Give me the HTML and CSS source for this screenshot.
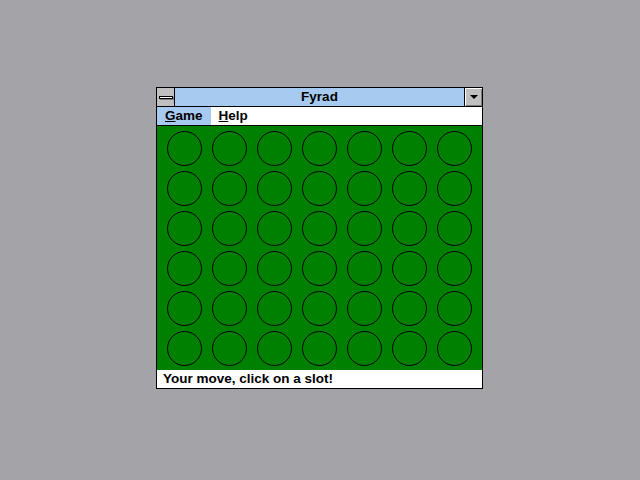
FILE: index.html
```html
<!DOCTYPE html>
<html lang="en">
<head>
    <meta charset="UTF-8">
    <title>Fyrad</title>
    <link rel="stylesheet" href="styles.css">
</head>
<body>
    <div class="window">
        <div class="titlebar">
            <div class="sysmenu"><span class="sysbar"></span></div>
            <div class="title">Fyrad</div>
            <div class="minbtn"><span class="arrow"></span></div>
        </div>
        <div class="menubar">
            <span class="menuitem active"><u>G</u>ame</span>
            <span class="menuitem"><u>H</u>elp</span>
        </div>
        <div class="board" id="board"></div>
        <div class="status">Your move, click on a slot!</div>
    </div>

    <script>
        const board = document.getElementById('board');
        for (let i = 0; i < 42; i++) {
            const slot = document.createElement('div');
            slot.className = 'slot';
            board.appendChild(slot);
        }
    </script>
</body>
</html>
```

FILE: styles.css
```css
body {
    margin: 0;
    background-color: #a4a3a8;
    font-family: "Liberation Sans", Arial, sans-serif;
    font-weight: bold;
    font-size: 13.5px;
    color: #000;
}
.window {
    position: absolute;
    left: 156px;
    top: 87px;
    width: 325px;
    border: 1px solid #000;
    background-color: #fff;
}
.titlebar {
    display: flex;
    height: 18px;
    border-bottom: 1px solid #000;
    background-color: #a6caf0;
}
.sysmenu {
    width: 18px;
    height: 18px;
    background-color: #c0c0c0;
    border-right: 1px solid #000;
    box-sizing: border-box;
    display: flex;
    align-items: center;
    justify-content: center;
}
.sysbar {
    display: block;
    width: 12px;
    height: 1px;
    border: 1px solid #000;
    background-color: #fff;
    box-shadow: 1px 1px 0 #808080;
}
.title {
    flex: 1;
    text-align: center;
    line-height: 18px;
}
.minbtn {
    width: 18px;
    height: 18px;
    box-sizing: border-box;
    border-left: 1px solid #000;
    background-color: #c0c0c0;
    box-shadow: inset 1px 1px 0 #fff, inset -1px -1px 0 #808080;
    display: flex;
    align-items: center;
    justify-content: center;
}
.arrow {
    width: 0;
    height: 0;
    border-left: 4px solid transparent;
    border-right: 4px solid transparent;
    border-top: 4px solid #000;
}
.menubar {
    display: flex;
    height: 18px;
    border-bottom: 1px solid #000;
    line-height: 18px;
}
.menuitem {
    padding: 0 8px;
}
.menuitem.active {
    background-color: #a6caf0;
}
.board {
    display: grid;
    grid-template-columns: repeat(7, 35px);
    grid-auto-rows: 35px;
    column-gap: 10px;
    row-gap: 5px;
    padding: 5px 10px 4px 10px;
    background-color: #008000;
}
.slot {
    box-sizing: border-box;
    border: 1px solid #000;
    border-radius: 50%;
}
.status {
    height: 18px;
    line-height: 18px;
    padding-left: 6px;
}
```
